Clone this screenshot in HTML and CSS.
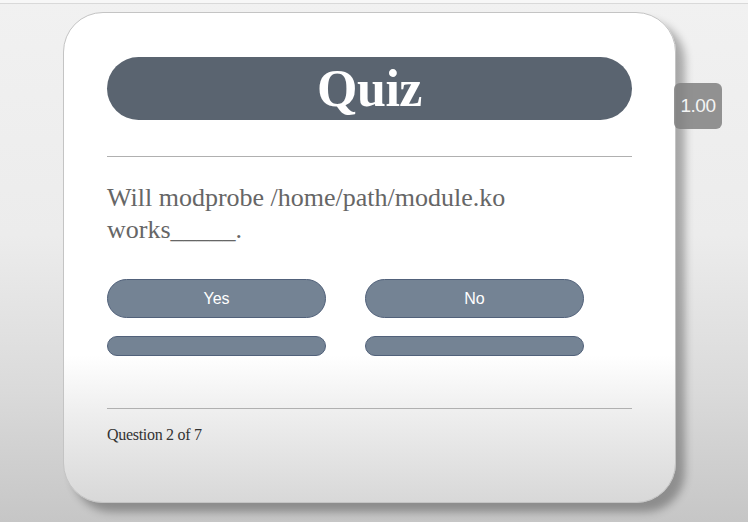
FILE: index.html
```html
<!DOCTYPE html>
<html>
<head>
<meta charset="utf-8">
<link rel="stylesheet" href="styles.css">
</head>
<body>
<div class="topbar"></div>
<div class="stage">
  <div class="card">
    <div class="title">Quiz</div>
    <hr class="rule">
    <p class="question">Will modprobe /home/path/module.ko<br>works_____.</p>
    <div class="answers">
      <button class="answer">Yes</button>
      <button class="answer">No</button>
      <button class="answer small"></button>
      <button class="answer small"></button>
    </div>
    <hr class="rule footer-rule">
    <p class="progress">Question 2 of 7</p>
  </div>
  <div class="badge">1.00</div>
</div>
</body>
</html>
```
FILE: styles.css
```css
html, body {
  margin: 0;
  padding: 0;
  height: 100%;
}
body {
  background: linear-gradient(to bottom, #f1f1f1 0%, #ececec 45%, #dadada 75%, #c6c6c6 100%);
  overflow: hidden;
  font-family: "Liberation Serif", serif;
}
.topbar {
  height: 3px;
  background: #f7f7f7;
  border-bottom: 1px solid #d9d9d9;
}
.stage {
  position: relative;
  padding: 8px 0 0 63px;
}
.card {
  box-sizing: border-box;
  width: 613px;
  height: 491px;
  border-radius: 40px;
  border: 1px solid #c4c4c4;
  background: linear-gradient(to bottom, #ffffff 0%, #ffffff 70%, #eeeeee 82%, #d8d8d8 100%);
  box-shadow: 9px 9px 9px rgba(0, 0, 0, 0.3);
  padding: 44px 43px 0 43px;
}
.title {
  height: 63px;
  border-radius: 32px;
  background: #5a6470;
  color: #ffffff;
  font-weight: bold;
  font-size: 52px;
  line-height: 63px;
  text-align: center;
  letter-spacing: -0.5px;
}
.rule {
  border: 0;
  height: 1px;
  background: #b0b0b0;
  margin: 36px 0 0 0;
}
.question {
  margin: 25px 0 0 0;
  font-size: 26px;
  line-height: 32px;
  color: #666666;
}
.answers {
  margin-top: 33px;
  display: grid;
  grid-template-columns: 219px 219px;
  column-gap: 39px;
  row-gap: 18px;
}
.answer {
  box-sizing: border-box;
  height: 39px;
  border-radius: 20px;
  border: 1px solid #51617a;
  background: #748394;
  color: #ffffff;
  font-family: "Liberation Sans", sans-serif;
  font-size: 16px;
  padding: 0;
}
.answer.small {
  height: 20px;
  border-radius: 10px;
}
.footer-rule {
  margin-top: 52px;
}
.progress {
  margin: 17px 0 0 0;
  font-size: 16px;
  line-height: 18px;
  color: #333333;
  letter-spacing: -0.3px;
}
.badge {
  position: absolute;
  left: 674px;
  top: 79px;
  width: 48px;
  height: 46px;
  border-radius: 6px;
  background: rgba(128, 128, 128, 0.85);
  color: #f4f4f4;
  font-family: "Liberation Sans", sans-serif;
  font-size: 19px;
  line-height: 46px;
  text-align: center;
  letter-spacing: -0.5px;
}
```
